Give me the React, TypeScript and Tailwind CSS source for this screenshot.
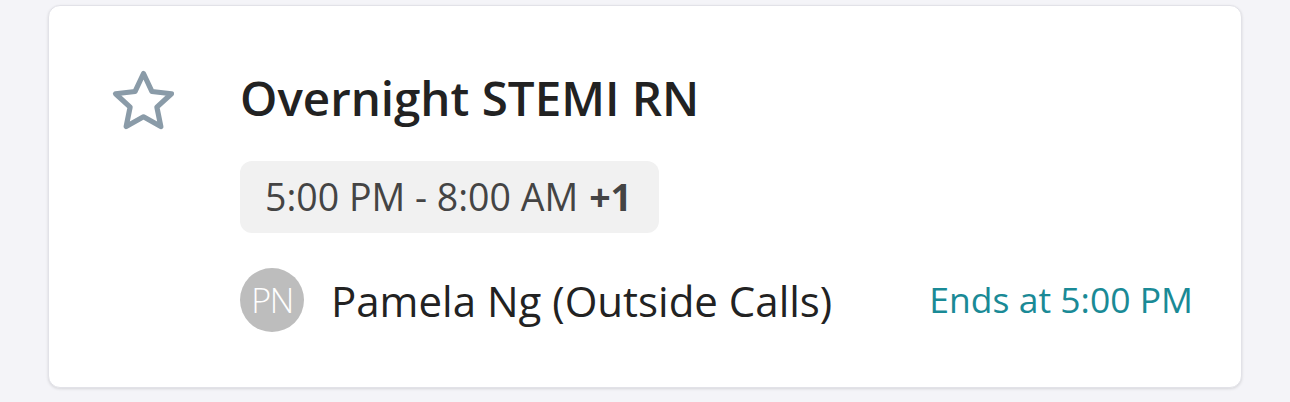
import React from "react";

const StarIcon: React.FC = () => (
  <svg
    width="73"
    height="73"
    viewBox="0 0 24 24"
    fill="none"
    stroke="#8a9ba8"
    strokeWidth="1.7"
    strokeLinecap="round"
    strokeLinejoin="round"
  >
    <path d="M12 2.8l2.75 5.9 6.45.75-4.8 4.4 1.3 6.4L12 17.05 6.3 20.25l1.3-6.4-4.8-4.4 6.45-.75z" />
  </svg>
);

const App: React.FC = () => {
  return (
    <div
      className="min-h-screen w-full bg-[#f4f4f8] pt-[5px] pl-[48px] pr-[48px]"
      style={{ fontFamily: "'Open Sans', 'Noto Sans', sans-serif" }}
    >
      {/* Shift card */}
      <div className="w-[1194px] h-[383px] rounded-[12px] bg-white border border-[#e2e2e8] shadow-[0_1px_3px_rgba(0,0,0,0.12)] flex pl-[58px] pr-[48px] pt-[62px]">
        <div className="w-[133px] shrink-0 -mt-[3px]">
          <StarIcon />
        </div>

        <div className="flex-1 flex flex-col">
          <h1 className="text-[47.5px] leading-[60px] font-semibold text-[#222222]">
            Overnight STEMI RN
          </h1>

          <div className="mt-[33px] self-start h-[72px] pl-[25px] pr-[27px] rounded-[12px] bg-[#f1f1f1] flex items-center text-[37.5px] text-[#444444]">
            <span>5:00 PM - 8:00 AM</span>
            <span className="ml-[11px] font-bold">+1</span>
          </div>

          <div className="mt-[35px] flex items-center">
            <div className="w-[64px] h-[64px] rounded-full bg-[#bdbdbd] flex items-center justify-center text-white text-[34px] font-light tracking-[-1.5px]">
              PN
            </div>
            <span className="ml-[27px] text-[42px] text-[#222222]">
              Pamela Ng (Outside Calls)
            </span>
            <span className="ml-auto text-[35.5px] text-[#1a8a96]">
              Ends at 5:00 PM
            </span>
          </div>
        </div>
      </div>
    </div>
  );
};

export default App;
